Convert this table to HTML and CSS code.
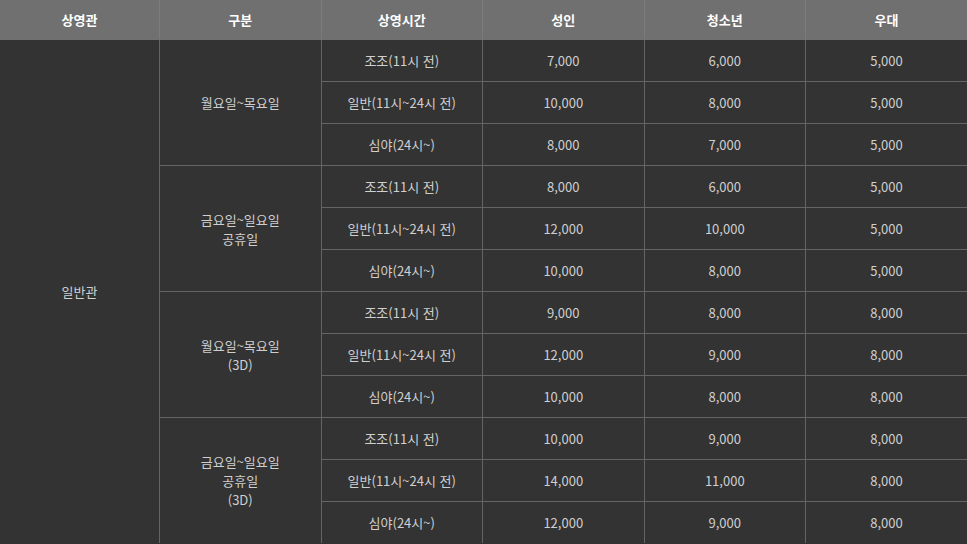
FILE: index.html
```html
<!DOCTYPE html>
<html lang="ko">
  <head>
    <meta charset="UTF-8" />
    <meta name="viewport" content="width=device-width, initial-scale=1.0" />
    <title>관람료 안내</title>
    <link rel="stylesheet" href="styles.css">
  </head>

  <body>
    <table class="price-table">
      <thead>
        <tr>
          <th class="col-hall">상영관</th>
          <th>구분</th>
          <th>상영시간</th>
          <th>성인</th>
          <th>청소년</th>
          <th>우대</th>
        </tr>
      </thead>
      <tbody>
        <tr>
          <td rowspan="12" class="hall">일반관</td>
          <td rowspan="3">월요일~목요일</td>
          <td>조조(11시 전)</td>
          <td>7,000</td>
          <td>6,000</td>
          <td>5,000</td>
        </tr>
        <tr>
          <td>일반(11시~24시 전)</td>
          <td>10,000</td>
          <td>8,000</td>
          <td>5,000</td>
        </tr>
        <tr>
          <td>심야(24시~)</td>
          <td>8,000</td>
          <td>7,000</td>
          <td>5,000</td>
        </tr>
        <tr>
          <td rowspan="3">금요일~일요일<br />공휴일</td>
          <td>조조(11시 전)</td>
          <td>8,000</td>
          <td>6,000</td>
          <td>5,000</td>
        </tr>
        <tr>
          <td>일반(11시~24시 전)</td>
          <td>12,000</td>
          <td>10,000</td>
          <td>5,000</td>
        </tr>
        <tr>
          <td>심야(24시~)</td>
          <td>10,000</td>
          <td>8,000</td>
          <td>5,000</td>
        </tr>
        <tr>
          <td rowspan="3">월요일~목요일<br />(3D)</td>
          <td>조조(11시 전)</td>
          <td>9,000</td>
          <td>8,000</td>
          <td>8,000</td>
        </tr>
        <tr>
          <td>일반(11시~24시 전)</td>
          <td>12,000</td>
          <td>9,000</td>
          <td>8,000</td>
        </tr>
        <tr>
          <td>심야(24시~)</td>
          <td>10,000</td>
          <td>8,000</td>
          <td>8,000</td>
        </tr>
        <tr>
          <td rowspan="3">금요일~일요일<br />공휴일<br />(3D)</td>
          <td>조조(11시 전)</td>
          <td>10,000</td>
          <td>9,000</td>
          <td>8,000</td>
        </tr>
        <tr>
          <td>일반(11시~24시 전)</td>
          <td>14,000</td>
          <td>11,000</td>
          <td>8,000</td>
        </tr>
        <tr>
          <td>심야(24시~)</td>
          <td>12,000</td>
          <td>9,000</td>
          <td>8,000</td>
        </tr>
      </tbody>
    </table>
  </body>
</html>
```

FILE: styles.css
```css
body {
  margin: 0;
  background-color: #333333;
  font-family: "Noto Sans CJK KR", "Noto Sans", sans-serif;
}

.price-table {
  width: 100%;
  border-collapse: collapse;
  border-style: hidden;
  table-layout: fixed;
  font-size: 13px;
}

.price-table th {
  height: 39px;
  padding: 0;
  background-color: #707070;
  color: #ffffff;
  font-weight: bold;
  border: 1px solid #7c7c7c;
  border-bottom: 1px solid #707070;
}

.price-table th.col-hall {
  width: 159px;
}

.price-table td {
  height: 41px;
  padding: 0;
  text-align: center;
  vertical-align: middle;
  color: #cfcfcf;
  line-height: 19px;
  border: 1px solid #646464;
}

.price-table td.hall {
  border-bottom: none;
}
```
